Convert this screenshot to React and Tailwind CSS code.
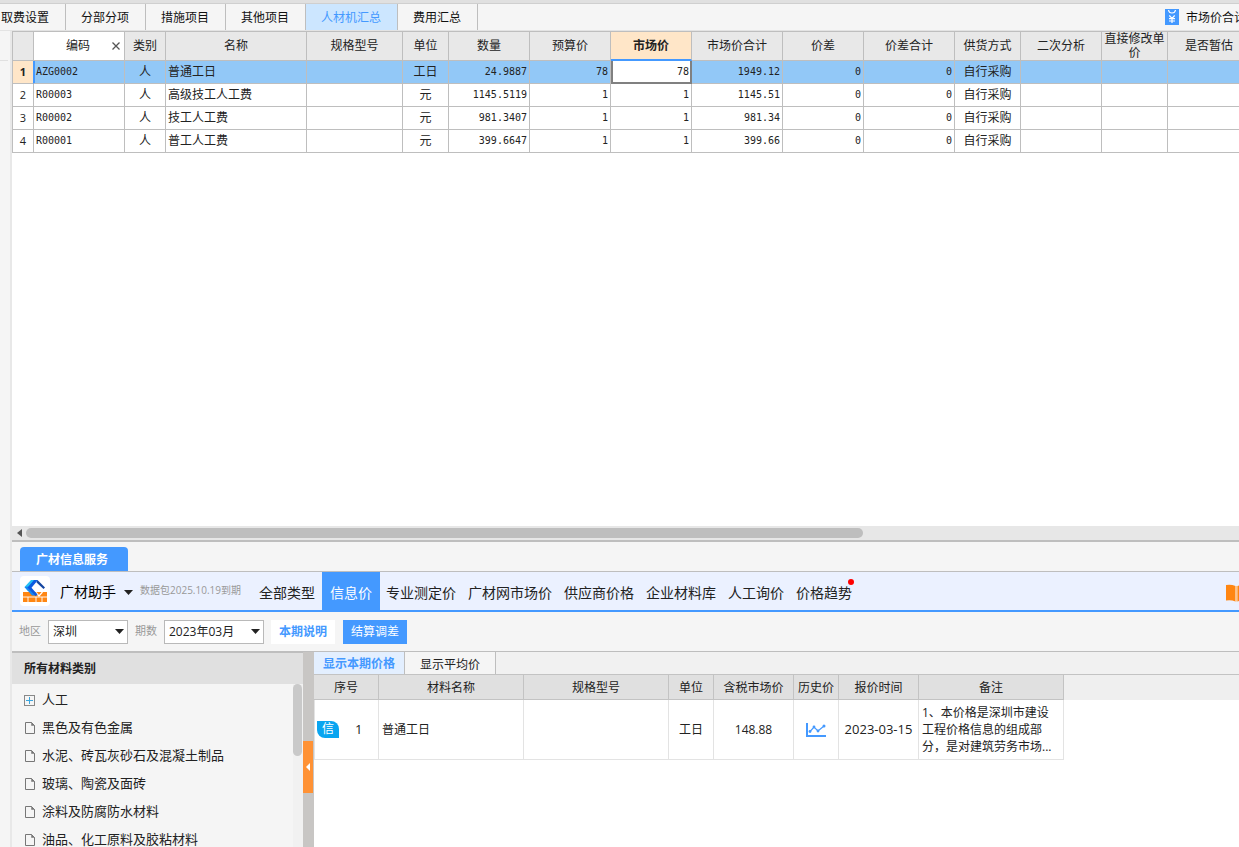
import { useState } from 'react'

const TABS = ['分部分项', '措施项目', '其他项目', '人材机汇总', '费用汇总']

const COLUMNS = [
  { key: 'category', label: '类别', align: 'text-center', col: 'w-[41px]' },
  { key: 'name', label: '名称', align: 'text-left', col: 'w-[141px]' },
  { key: 'spec', label: '规格型号', align: 'text-left', col: 'w-[96px]' },
  { key: 'unit', label: '单位', align: 'text-center', col: 'w-[46px]' },
  { key: 'qty', label: '数量', align: 'text-right', col: 'w-[81px]', numeric: true },
  { key: 'budget', label: '预算价', align: 'text-right', col: 'w-[81px]', numeric: true },
  { key: 'market', label: '市场价', align: 'text-right', col: 'w-[81px]', numeric: true },
  { key: 'marketTotal', label: '市场价合计', align: 'text-right', col: 'w-[91px]', numeric: true },
  { key: 'diff', label: '价差', align: 'text-right', col: 'w-[81px]', numeric: true },
  { key: 'diffTotal', label: '价差合计', align: 'text-right', col: 'w-[91px]', numeric: true },
  { key: 'supply', label: '供货方式', align: 'text-center', col: 'w-[66px]' },
  { key: 'second', label: '二次分析', align: 'text-center', col: 'w-[81px]' },
  { key: 'direct', label: '直接修改单价', align: 'text-center', col: 'w-[66px]' },
  { key: 'estimate', label: '是否暂估', align: 'text-center', col: '' },
]

const ROWS = [
  { code: 'AZG0002', category: '人', name: '普通工日', unit: '工日', qty: '24.9887', budget: '78', market: '78', marketTotal: '1949.12', diff: '0', diffTotal: '0', supply: '自行采购' },
  { code: 'R00003', category: '人', name: '高级技工人工费', unit: '元', qty: '1145.5119', budget: '1', market: '1', marketTotal: '1145.51', diff: '0', diffTotal: '0', supply: '自行采购' },
  { code: 'R00002', category: '人', name: '技工人工费', unit: '元', qty: '981.3407', budget: '1', market: '1', marketTotal: '981.34', diff: '0', diffTotal: '0', supply: '自行采购' },
  { code: 'R00001', category: '人', name: '普工人工费', unit: '元', qty: '399.6647', budget: '1', market: '1', marketTotal: '399.66', diff: '0', diffTotal: '0', supply: '自行采购' },
]

const SERVICES = ['专业测定价', '广材网市场价', '供应商价格', '企业材料库', '人工询价']

const CATEGORIES = ['黑色及有色金属', '水泥、砖瓦灰砂石及混凝土制品', '玻璃、陶瓷及面砖', '涂料及防腐防水材料', '油品、化工原料及胶粘材料']

const CELL = 'h-[23px] border-r border-b border-[#bebebe] px-0.5 whitespace-nowrap'
const HEAD = 'h-[30px] border-t border-r border-b border-[#bebebe] font-normal leading-[14px]'
const PRICE_HEAD = 'h-[25px] border-r border-b border-[#c3c3c3] bg-[#e0e0e0] pt-0.5 font-normal whitespace-nowrap'
const PRICE_CELL = 'h-[60px] border-r border-b border-[#e3e3e3]'

function YenIcon() {
  return (
    <svg viewBox="0 0 14 16" className="h-4 w-3.5 shrink-0" fill="none" stroke="#fff">
      <rect width="14" height="16" fill="#4499ff" stroke="none" />
      <path d="M3.5 1Q4 4 7 4Q10 4 10.5 1" strokeWidth="1.2" />
      <path d="M4.3 6.5L7 9.3L9.7 6.5M7 9.3V14M4 9.7H10M4 12H10" strokeWidth="1.2" />
    </svg>
  )
}

function LogoIcon() {
  return (
    <span className="flex size-[30px] shrink-0 items-center justify-center rounded bg-white">
      <svg viewBox="0 0 24 24" className="size-6">
        <path d="M0 13H24V23H0Z" fill="#ff8612" />
        <path d="M0 18H24M5 18V23M13 18V23M19 18V23" stroke="#fff" strokeWidth="0.9" fill="none" />
        <path d="M13 13.5L16 17L19.5 13" stroke="#fff" strokeWidth="1.2" fill="none" />
        <path d="M8 1H14L7.5 8.5L5 12L1.5 8Z" fill="#26c0f5" />
        <path d="M1.5 8L5 7.5L14 16.5H9Z" fill="#1887f5" />
        <path d="M11 1H15L8.5 8.8L14.5 15.5L12.5 17L4.5 8.5Z" fill="#0d5be0" />
        <path d="M14.5 1L22 8.5L20.5 10L13.5 3.5Z" fill="#1546a0" />
      </svg>
    </span>
  )
}

function BookIcon() {
  return (
    <svg viewBox="0 0 22 18" className="h-[18px] w-[22px] max-w-none shrink-0">
      <path d="M0 1Q5 0 9.5 2V17.5Q5 15.5 0 16.5Z" fill="#ff8612" />
      <path d="M9.5 2H11.5V17.5H9.5Z" fill="#ffc48a" />
      <path d="M11.5 2Q17 0 22 1V16.5Q17 15.5 11.5 17.5Z" fill="#ff8612" />
    </svg>
  )
}

function DownArrow({ className }) {
  return (
    <svg viewBox="0 0 9 5" className={`h-[5px] w-[9px] shrink-0 ${className || ''}`}>
      <path d="M0 0H9L4.5 5Z" fill="#222" />
    </svg>
  )
}

function Picker({ id, label, value, options, className }) {
  return (
    <div className="flex items-center gap-[7px]">
      <label htmlFor={id} className="text-[11px] text-[#999]">{label}</label>
      <div className="relative">
        <select id={id} defaultValue={value} className={`block h-6 appearance-none border border-[#b9b9b9] bg-white pl-1 text-xs text-[#222] ${className}`}>
          {options.map((o) => <option key={o}>{o}</option>)}
        </select>
        <DownArrow className="pointer-events-none absolute top-[9px] right-1" />
      </div>
    </div>
  )
}

function SummaryTable() {
  const [price, setPrice] = useState('78')

  return (
    <table className="w-full min-w-[1239px] table-fixed border-separate border-spacing-0 text-xs text-[#222]">
      <colgroup>
        <col className="w-[22px]" />
        <col className="w-[91px]" />
        {COLUMNS.map((c) => <col key={c.key} className={c.col} />)}
      </colgroup>
      <thead>
        <tr className="bg-[#e8e8e8]">
          <th className={`${HEAD} border-l`} />
          <th className={`${HEAD} bg-white`}>
            <div className="flex items-center">
              <span className="flex-1 pl-3.5">编码</span>
              <button aria-label="清除" className="flex h-4 w-4 items-center justify-center">
                <svg viewBox="0 0 8 8" className="size-2" stroke="#555" strokeWidth="1.3"><path d="M0.5 0.5L7.5 7.5M7.5 0.5L0.5 7.5" /></svg>
              </button>
            </div>
          </th>
          {COLUMNS.map((c) => (
            c.key === 'market'
              ? <th key={c.key} className="h-[30px] border-t border-r border-b-2 border-[#bebebe] border-b-[#4499ff] bg-[#ffe6c8] leading-[14px] font-bold">{c.label}</th>
              : <th key={c.key} className={HEAD}>{c.label}</th>
          ))}
        </tr>
      </thead>
      <tbody>
        {ROWS.map((row, i) => (
          <tr key={row.code} className={i === 0 ? 'bg-[#92c8f7]' : 'bg-white'}>
            <td className={`${CELL} border-l text-center text-[11px] ${i === 0 ? 'border-r-[#4499ff] bg-[#ffe6c8] font-bold' : ''}`}>{i + 1}</td>
            <td className={`${CELL} font-['DejaVu_Sans_Mono',monospace] text-[10px] ${i === 0 ? 'shadow-[inset_1px_0_0_#4499ff]' : ''}`}>{row.code}</td>
            {COLUMNS.map((c) => (
              i === 0 && c.key === 'market' ? (
                <td key={c.key} className="h-[23px] border-r-2 border-b-2 border-l-2 border-[#808080] bg-white p-0">
                  <input aria-label="市场价" value={price} onChange={(e) => setPrice(e.target.value)}
                    className="block h-5 w-full bg-white pr-px text-right font-['DejaVu_Sans_Mono',monospace] text-[10px] outline-none" />
                </td>
              ) : (
                <td key={c.key} className={`${CELL} ${c.align} ${c.numeric ? "font-['DejaVu_Sans_Mono',monospace] text-[10px]" : ''}`}>{row[c.key]}</td>
              )
            ))}
          </tr>
        ))}
      </tbody>
    </table>
  )
}

function PriceTable() {
  return (
    <table className="w-[750px] table-fixed border-separate border-spacing-0 text-xs text-[#222]">
      <colgroup>
        <col className="w-[65px]" />
        <col className="w-[145px]" />
        <col className="w-[145px]" />
        <col className="w-[45px]" />
        <col className="w-[80px]" />
        <col className="w-[45px]" />
        <col className="w-[80px]" />
        <col className="w-[145px]" />
      </colgroup>
      <thead>
        <tr>
          {['序号', '材料名称', '规格型号', '单位', '含税市场价', '历史价', '报价时间', '备注'].map((h) => <th key={h} className={PRICE_HEAD}>{h}</th>)}
        </tr>
      </thead>
      <tbody>
        <tr className="bg-white">
          <td className={`${PRICE_CELL} border-l`}>
            <div className="flex items-center pl-0.5">
              <span className="flex h-[17px] w-[22px] items-center justify-center rounded-tr-lg rounded-bl-lg bg-[#0aa5f0] text-white">信</span>
              <span className="pl-4 text-[13px]">1</span>
            </div>
          </td>
          <td className={`${PRICE_CELL} px-[3px]`}>普通工日</td>
          <td className={PRICE_CELL} />
          <td className={`${PRICE_CELL} text-center`}>工日</td>
          <td className={`${PRICE_CELL} text-center`}>148.88</td>
          <td className={PRICE_CELL}>
            <button aria-label="历史价" className="mx-auto block">
              <svg viewBox="0 0 20 14" className="h-3.5 w-5" fill="none" stroke="#4499ff">
                <path d="M1 0V13H20" strokeWidth="2" />
                <path d="M4 8.5L8 4L12 8L18 3" strokeWidth="1.2" />
                <g fill="#4499ff" stroke="none">
                  <circle cx="4" cy="8.5" r="1.4" /><circle cx="8" cy="4" r="1.4" /><circle cx="12" cy="8" r="1.4" /><circle cx="18" cy="3" r="1.5" />
                </g>
              </svg>
            </button>
          </td>
          <td className={`${PRICE_CELL} text-center text-[13px] whitespace-nowrap`}>2023-03-15</td>
          <td className={`${PRICE_CELL} px-[3px] leading-[17px]`}>1、本价格是深圳市建设工程价格信息的组成部分，是对建筑劳务市场...</td>
        </tr>
      </tbody>
    </table>
  )
}

export default function App() {
  const [tab, setTab] = useState('人材机汇总')

  return (
    <div className="flex h-screen flex-col overflow-hidden bg-[#f5f5f5] font-['Open_Sans','Noto_Sans_CJK_SC',sans-serif] text-xs text-[#111]">
      <div className="h-1 shrink-0 border-b border-[#cfcfcf] bg-[#e0e0e0]" />
      <header className="flex h-[27px] shrink-0 border-b border-[#e3e3e3]">
        <nav className="flex">
          <button onClick={() => setTab('取费设置')} className="border-r border-[#bebebe] pt-0.5 pr-4 pl-px">取费设置</button>
          {TABS.map((t) => (
            <button key={t} onClick={() => setTab(t)}
              className={`border-r border-[#bebebe] pt-0.5 pr-4 pl-[15px] ${tab === t ? 'bg-[#cce6ff] text-[#4499ff]' : ''}`}>{t}</button>
          ))}
        </nav>
        <button className="ml-auto flex items-center gap-[7px]">
          <YenIcon />
          <span className="w-[53px] overflow-hidden pt-0.5 whitespace-nowrap">市场价合计</span>
        </button>
      </header>

      <div className="flex min-h-0 flex-1">
        <div className="w-3 shrink-0 border-r-2 border-[#e8e8e8]">
          <div className="mr-0.5 h-[30px] border-b border-[#e0e0e0]" />
        </div>

        <main className="flex min-w-0 flex-1 flex-col">
          <section className="min-h-0 flex-1 overflow-hidden bg-white">
            <SummaryTable />
          </section>

          <div className="flex h-4 shrink-0 items-center gap-1 border-b-2 border-[#bebebe] bg-[#e7e7e7] pl-[5px]">
            <svg viewBox="0 0 5 8" className="h-2 w-[5px]"><path d="M5 0V8L0 4Z" fill="#555" /></svg>
            <div className="flex-1">
              <div className="h-2.5 w-[69%] rounded-full bg-[#bebebe]" />
            </div>
          </div>

          <div className="flex h-[30px] shrink-0 items-end border-b border-[#bebebe] pl-2">
            <button className="h-6 rounded-t-sm bg-[#4499ff] pt-0.5 pr-5 pl-4 font-bold text-white">广材信息服务</button>
          </div>

          <div className="flex h-10 shrink-0 border-b-2 border-[#4499ff] bg-[#ebf1ff] pl-2">
            <div className="flex w-[232px] shrink-0 items-center">
              <LogoIcon />
              <button className="ml-2.5 flex items-center gap-2 pt-0.5 text-sm whitespace-nowrap text-black">
                广材助手
                <DownArrow />
              </button>
              <span className="ml-[7px] text-[10px] whitespace-nowrap text-[#999]">数据包2025.10.19到期</span>
            </div>
            <nav className="flex text-sm whitespace-nowrap text-[#222]">
              <button className="px-[7px] pt-1">全部类型</button>
              <button className="bg-[#4499ff] px-2 pt-1 text-white">信息价</button>
              {SERVICES.map((s) => <button key={s} className="px-1.5 pt-1">{s}</button>)}
              <button className="relative px-1.5 pt-1">
                价格趋势
                <span className="absolute top-[7px] right-1 size-1.5 rounded-full bg-[#ff0000]" />
              </button>
            </nav>
            <button aria-label="帮助手册" className="ml-auto flex w-[13px] items-center overflow-hidden pt-1">
              <BookIcon />
            </button>
          </div>

          <div className="flex h-[39px] shrink-0 items-center gap-[7px] pl-[7px] whitespace-nowrap">
            <Picker id="region" label="地区" value="深圳" options={['深圳', '广州']} className="w-20" />
            <Picker id="period" label="期数" value="2023年03月" options={['2023年03月', '2023年02月']} className="w-[100px]" />
            <button className="h-6 bg-white px-2 font-bold text-[#4499ff]">本期说明</button>
            <button className="ml-px h-6 bg-[#4499ff] px-2 text-white">结算调差</button>
          </div>

          <div className="flex h-[196px] shrink-0 border-t border-[#bebebe]">
            <aside className="flex w-[291px] shrink-0 flex-col overflow-hidden">
              <h2 className="flex h-8 shrink-0 items-center border-t border-[#bebebe] bg-[#e0e0e0] pl-3 font-bold text-[#222]">所有材料类别</h2>
              <div className="flex min-h-0 flex-1 overflow-hidden">
                <ul className="flex-1 pt-0.5 pl-3 text-[13px] text-[#222]">
                  <li className="flex h-7 items-center gap-[7px]">
                    <svg viewBox="0 0 11 11" className="size-[11px]" fill="none">
                      <rect x="0.5" y="0.5" width="10" height="10" stroke="#888" />
                      <path d="M5.5 2V9M2 5.5H9" stroke="#3aa5dd" />
                    </svg>
                    人工
                  </li>
                  {CATEGORIES.map((c) => (
                    <li key={c} className="flex h-7 items-center gap-[7px]">
                      <svg viewBox="0 0 11 12" className="h-3 w-[11px]" fill="none" stroke="#777">
                        <path d="M1.5 0.5H7.5L10.5 3.5V11.5H1.5Z" />
                        <path d="M7.5 0.5V3.5H10.5Z" fill="#777" strokeWidth="0.5" />
                      </svg>
                      {c}
                    </li>
                  ))}
                </ul>
                <div className="w-2.5 bg-[#f1f1f1]">
                  <div className="mr-px h-[72px] rounded-full bg-[#c9c9c9]" />
                </div>
              </div>
            </aside>

            <div className="w-[11px] shrink-0 bg-[#c8c6c4] pt-[89px]">
              <button aria-label="收起" className="flex h-[52px] w-2.5 items-center justify-center bg-[#ff9235]">
                <svg viewBox="0 0 4 8" className="h-2 w-1"><path d="M4 0V8L0 4Z" fill="#fff" /></svg>
              </button>
            </div>

            <section className="min-w-0 flex-1 overflow-hidden bg-white">
              <div className="flex h-[23px] border-b border-[#c3c3c3] bg-[#f1f1f1]">
                <button className="border-r border-[#bebebe] bg-[#e3efff] px-[9px] pt-0.5 font-bold text-[#4499ff]">显示本期价格</button>
                <button className="border-r border-[#bebebe] bg-[#f5f5f5] px-[15px] pt-1 text-[#222]">显示平均价</button>
              </div>
              <div className="bg-[linear-gradient(#efefef_25px,#fff_25px)]">
                <PriceTable />
              </div>
            </section>
          </div>
        </main>
      </div>
    </div>
  )
}
